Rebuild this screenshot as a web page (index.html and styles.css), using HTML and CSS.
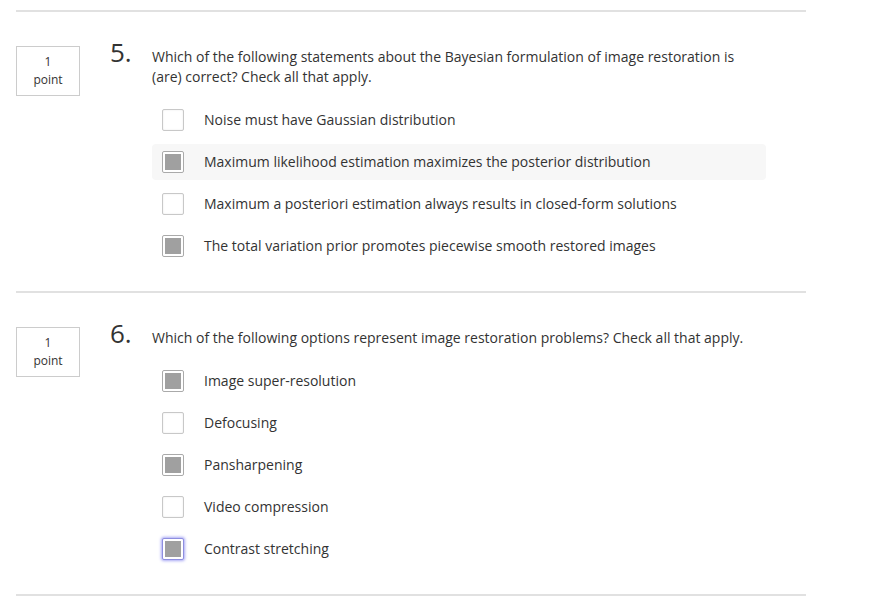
FILE: index.html
```html
<!DOCTYPE html>
<html>
<head>
<meta charset="utf-8">
<link rel="stylesheet" href="styles.css">
</head>
<body>
<div class="quiz">
  <div class="question">
    <div class="q-body">
      <div class="points"><span>1</span><span>point</span></div>
      <div class="num">5.</div>
      <div class="content">
        <div class="prompt">Which of the following statements about the Bayesian formulation of image restoration is (are) correct? Check all that apply.</div>
        <div class="options">
          <div class="option"><span class="box"></span><span class="label">Noise must have Gaussian distribution</span></div>
          <div class="option hover"><span class="box checked"></span><span class="label">Maximum likelihood estimation maximizes the posterior distribution</span></div>
          <div class="option"><span class="box"></span><span class="label">Maximum a posteriori estimation always results in closed-form solutions</span></div>
          <div class="option"><span class="box checked"></span><span class="label">The total variation prior promotes piecewise smooth restored images</span></div>
        </div>
      </div>
    </div>
  </div>
  <div class="question">
    <div class="q-body">
      <div class="points"><span>1</span><span>point</span></div>
      <div class="num">6.</div>
      <div class="content">
        <div class="prompt">Which of the following options represent image restoration problems? Check all that apply.</div>
        <div class="options">
          <div class="option"><span class="box checked"></span><span class="label">Image super-resolution</span></div>
          <div class="option"><span class="box"></span><span class="label">Defocusing</span></div>
          <div class="option"><span class="box checked"></span><span class="label">Pansharpening</span></div>
          <div class="option"><span class="box"></span><span class="label">Video compression</span></div>
          <div class="option"><span class="box checked focus"></span><span class="label">Contrast stretching</span></div>
        </div>
      </div>
    </div>
  </div>
  <div class="end-rule"></div>
</div>
</body>
</html>
```
FILE: styles.css
```css
html, body {
  margin: 0;
  padding: 0;
  background: #fff;
}
body {
  font-family: "Open Sans", "Noto Sans", sans-serif;
  color: #333;
}
.quiz {
  padding-top: 10px;
  margin-left: 16px;
  width: 790px;
}
.question {
  border-top: 2px solid #e1e1e1;
  padding: 34px 0 27px;
}
.end-rule {
  border-top: 2px solid #e1e1e1;
}
.q-body {
  display: flex;
  align-items: flex-start;
}
.points {
  box-sizing: border-box;
  width: 64px;
  height: 50px;
  border: 1px solid #ccc;
  display: flex;
  flex-direction: column;
  align-items: center;
  padding-top: 6px;
  font-size: 12px;
  line-height: 18px;
  color: #333;
}
.num {
  margin-left: 30px;
  width: 42px;
  font-size: 26px;
  line-height: 26px;
  margin-top: -7px;
  color: #333;
}
.content {
  width: 614px;
}
.prompt {
  font-size: 14px;
  line-height: 20px;
  padding-top: 1px;
  color: #333;
}
.options {
  margin-top: 15px;
  display: flex;
  flex-direction: column;
  gap: 6px;
}
.option {
  display: flex;
  align-items: center;
  height: 36px;
  padding-left: 10px;
  border-radius: 4px;
  font-size: 14px;
}
.option.hover {
  background: #f7f7f7;
}
.box {
  box-sizing: border-box;
  width: 22px;
  height: 22px;
  border: 1px solid #c8c8c8;
  border-radius: 2px;
  background: #fff;
  box-shadow: inset 0 0 2px #e6e6e6;
  padding: 2px;
  flex: none;
}
.box.checked::before {
  content: "";
  display: block;
  width: 16px;
  height: 16px;
  background: #a0a0a0;
}
.box.checked {
  border-color: #aaa;
  box-shadow: none;
}
.box.focus {
  border-color: #8e8ee0;
  box-shadow: 0 0 3px 1px #a8a8f4;
}
.label {
  margin-left: 20px;
  line-height: 20px;
  color: #333;
}
```
